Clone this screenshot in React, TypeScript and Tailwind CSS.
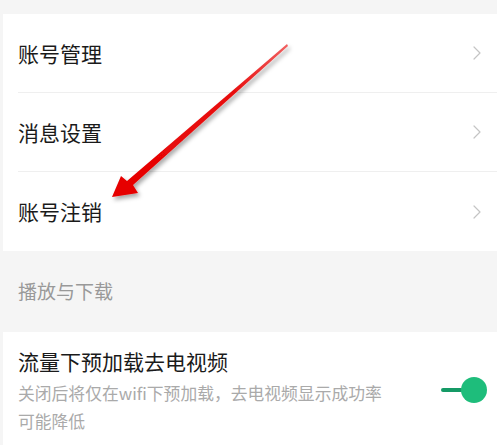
import { ChevronRight } from 'lucide-react'

const font = { fontFamily: '"Noto Sans CJK SC", "Noto Sans", sans-serif' }

function Row({ label, last }: { label: string; last?: boolean }) {
  return (
    <div className="pl-[15px]">
      <div className={`h-[79px] flex items-center justify-between pr-[8px] ${last ? '' : 'border-b border-[#efefef]'}`}>
        <span className="text-[21px] text-[#1a1a1a] leading-none">{label}</span>
        <ChevronRight className="w-[24px] h-[24px] text-[#c4c4c4]" strokeWidth={1.2} />
      </div>
    </div>
  )
}

export default function App() {
  return (
    <div className="relative w-[497px] h-[445px] bg-[#f5f5f5] overflow-hidden" style={font}>
      <div className="h-[14px]" />
      <div className="ml-[3px] bg-white">
        <Row label="账号管理" />
        <Row label="消息设置" />
        <Row label="账号注销" last />
      </div>
      <div className="ml-[3px] h-[81px] flex items-center pl-[15px]">
        <span className="text-[19px] text-[#999]">播放与下载</span>
      </div>
      <div className="ml-[3px] bg-white h-[120px] pl-[15px] pt-[15px] flex justify-between">
        <div>
          <div className="text-[21px] text-[#1a1a1a] leading-[28px]">流量下预加载去电视频</div>
          <div className="mt-[4px] text-[16.8px] text-[#aaa] leading-[28px] w-[400px]">
            关闭后将仅在wifi下预加载，去电视频显示成功率<br />可能降低
          </div>
        </div>
        <div className="flex items-center h-[86px] pr-[10px]">
          <div className="w-[22px] h-[4px] rounded-full bg-[#159a66]" />
          <div className="w-[26px] h-[26px] rounded-full bg-[#1ebd7b] -ml-[2px]" />
        </div>
      </div>
      <svg className="absolute left-0 top-0 pointer-events-none" width="497" height="445">
        <defs>
          <filter id="sh" x="-20%" y="-20%" width="140%" height="140%">
            <feDropShadow dx="2" dy="3" stdDeviation="2" floodColor="#000" floodOpacity="0.35" />
          </filter>
          <linearGradient id="g" x1="287" y1="45" x2="112" y2="197" gradientUnits="userSpaceOnUse">
            <stop offset="0" stopColor="#f06060" />
            <stop offset="0.3" stopColor="#e81010" />
            <stop offset="1" stopColor="#e60000" />
          </linearGradient>
        </defs>
        <polygon
          filter="url(#sh)"
          fill="url(#g)"
          points="287,44 288,46 133,185 138,193 112,197 121,176 127,181"
        />
      </svg>
    </div>
  )
}
